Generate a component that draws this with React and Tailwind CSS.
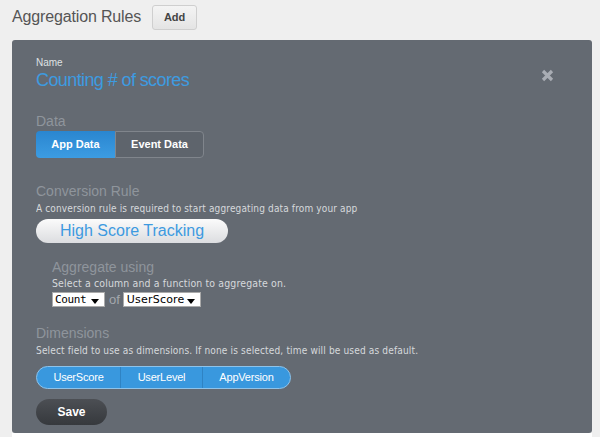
import { useState } from "react";

const dims = ["UserScore", "UserLevel", "AppVersion"];

const Caret = () => (
  <svg width="8" height="5" viewBox="0 0 8 5" className="absolute right-[5px] bottom-[2px]">
    <path d="M0 0h8L4 5z" fill="#000" />
  </svg>
);

const App = () => {
  const [source, setSource] = useState("app");

  return (
    <div className="min-h-[437px] w-[600px] bg-[#efefef] pl-[12px] pr-[8px] font-['Liberation_Sans',sans-serif]">
      <div className="flex h-[40px] items-start pt-[5px]">
        <h1 className="mt-[2px] text-[16px] leading-[20px] tracking-[-0.15px] text-[#555]">Aggregation Rules</h1>
        <button className="ml-[11px] h-[25px] w-[45px] rounded-[3px] border border-[#cfcfcf] bg-gradient-to-b from-[#f4f4f4] to-[#e4e4e4] text-[11px] font-bold text-[#444]">
          Add
        </button>
      </div>

      <div className="relative h-[393px] rounded-[3px] bg-[#646a72] pl-[24px] pt-[17px]">
        <button className="absolute right-[38px] top-[29px] text-[#a9adb4]">
          <svg width="13" height="13" viewBox="0 0 13 13">
            <path d="M2 2l9 9M11 2l-9 9" stroke="currentColor" strokeWidth="3.2" />
          </svg>
        </button>

        <p className="text-[10px] leading-[12px] text-[#dfe1e3]">Name</p>
        <p className="mt-[1px] text-[18px] font-light leading-[20px] tracking-[-0.6px] text-[#3d9be0]">
          Counting # of scores
        </p>

        <p className="mt-[22px] text-[14px] leading-[18px] text-[#8f959c]">Data</p>
        <div className="mt-[1px] flex h-[27px] w-[168px] text-[11px] font-bold text-white">
          <button
            onClick={() => setSource("app")}
            className="w-[79px] rounded-l-[4px] bg-gradient-to-b from-[#2a86d0] to-[#3c9ce2]"
          >
            App Data
          </button>
          <button
            onClick={() => setSource("event")}
            className="w-[89px] rounded-r-[4px] border border-[#80858c] bg-[#5e646c]"
          >
            Event Data
          </button>
        </div>

        <p className="mt-[24px] text-[14px] leading-[18px] text-[#8f959c]">Conversion Rule</p>
        <p className="mt-[3px] origin-left scale-x-[0.9] whitespace-nowrap text-[10px] leading-[12px] tracking-[0.15px] text-[#d6d9dc] font-['DejaVu_Sans',sans-serif]">
          A conversion rule is required to start aggregating data from your app
        </p>
        <div className="mt-[4px] flex h-[24px] w-[192px] items-center justify-center rounded-full bg-gradient-to-b from-[#fbfbfb] to-[#dcdde0] text-[16px] text-[#3d9ae0]">
          High Score Tracking
        </div>

        <div className="pl-[16px]">
          <p className="mt-[15px] text-[14px] leading-[18px] text-[#8f959c]">Aggregate using</p>
          <p className="mt-[2px] origin-left scale-x-[0.94] whitespace-nowrap text-[10px] leading-[12px] tracking-[0.15px] text-[#d6d9dc] font-['DejaVu_Sans',sans-serif]">
            Select a column and a function to aggregate on.
          </p>
          <div className="mt-[2px] flex items-center">
            <div className="relative h-[15px] w-[53px] border border-[#aaa] bg-white pl-[2px] text-[11px] leading-[13px] tracking-[-0.4px] text-black font-['DejaVu_Sans_Mono',monospace]">
              Count
              <Caret />
            </div>
            <span className="ml-[4px] mr-[3px] text-[13px] leading-[15px] text-[#a3a7ad]">of</span>
            <div className="relative h-[15px] w-[78px] border border-[#aaa] bg-white pl-[3px] text-[11px] leading-[13px] tracking-[0.2px] text-black font-['DejaVu_Sans',sans-serif]">
              UserScore
              <Caret />
            </div>
          </div>
        </div>

        <p className="mt-[17px] text-[14px] leading-[18px] text-[#8f959c]">Dimensions</p>
        <p className="mt-[3px] origin-left scale-x-[0.905] whitespace-nowrap text-[10px] leading-[12px] tracking-[0.15px] text-[#d6d9dc] font-['DejaVu_Sans',sans-serif]">
          Select field to use as dimensions. If none is selected, time will be used as default.
        </p>
        <div className="mt-[9px] flex h-[23px] w-[255px] overflow-hidden rounded-full border border-[#8ec3ea] bg-[#3998de] text-[11px] tracking-[-0.2px] text-white">
          {dims.map((d, i) => (
            <div
              key={d}
              className={
                "flex items-center justify-center " +
                (i === 0 ? "w-[83px]" : i === 1 ? "w-[82px] border-l border-[#2f83c3]" : "flex-1 border-l border-[#2f83c3]")
              }
            >
              {d}
            </div>
          ))}
        </div>

        <button className="mt-[10px] h-[26px] w-[71px] rounded-full bg-gradient-to-b from-[#4c4f54] to-[#36393d] text-[12px] font-bold text-white">
          Save
        </button>
      </div>
      <div className="h-[4px] bg-white" />
    </div>
  );
};

export default App;
